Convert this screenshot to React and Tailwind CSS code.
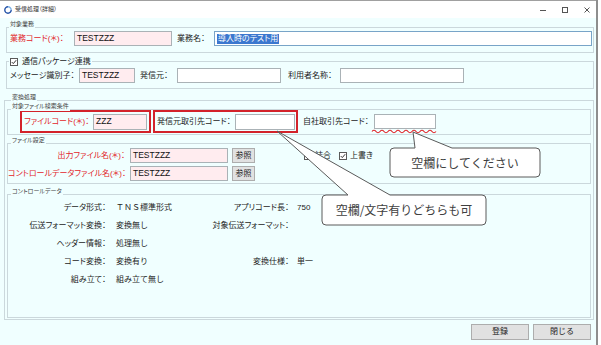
import React from 'react';

const lbl = "whitespace-nowrap text-[8px] leading-[10px] [font-feature-settings:'palt']";
const red = 'text-[#e2262b]';

function GroupLabel({ children, className = '' }) {
  return (
    <div className={`relative z-[1] w-fit whitespace-nowrap bg-[#f0ffff] px-[1px] text-[6px] leading-[9px] text-[#444] [font-feature-settings:'palt'] ${className}`}>
      {children}
    </div>
  );
}

function Field({ tone = 'white', className = '', children }) {
  const tones = {
    pink: 'border-[#aab2b6] bg-[#ffecef]',
    white: 'border-[#aab2b6] bg-white',
    focus: 'border-[#78a4c8] bg-white',
  };
  return (
    <div className={`flex shrink-0 items-center overflow-hidden whitespace-nowrap border px-[2px] text-[8.5px] text-[#111] ${tones[tone]} ${className}`}>
      {children}
    </div>
  );
}

function Btn({ className = '', children }) {
  return (
    <div className={`flex shrink-0 items-center justify-center border border-[#adadad] bg-[#e1e1e1] text-[8px] text-[#222] ${className}`}>
      {children}
    </div>
  );
}

function Check({ className = '' }) {
  return (
    <svg width="8" height="8" viewBox="0 0 8 8" className={`shrink-0 ${className}`}>
      <rect x="0.5" y="0.5" width="7" height="7" fill="white" stroke="#5a5a5a" />
      <path d="M1.8 4.1 L3.3 5.6 L6.2 2.2" fill="none" stroke="#333" strokeWidth="1" />
    </svg>
  );
}

function AppIcon() {
  return (
    <svg width="8" height="8" viewBox="0 0 8 8" className="shrink-0">
      <path d="M4 0.8 A3.2 3.2 0 0 1 7.2 4" fill="none" stroke="#7fb2e5" strokeWidth="1.4" />
      <path d="M7.2 4 A3.2 3.2 0 1 1 4 0.8" fill="none" stroke="#2553a8" strokeWidth="1.4" />
    </svg>
  );
}

const dataRows = [
  ['データ形式：', 'ＴＮＳ標準形式', 'アプリコード長：', '750'],
  ['伝送フォーマット変換：', '変換無し', '対象伝送フォーマット：', ''],
  ['ヘッダー情報：', '処理無し', '', ''],
  ['コード変換：', '変換有り', '変換仕様：', '単一'],
  ['組み立て：', '組み立て無し', '', ''],
];

// red squiggle under the 自社取引先コード field
let wave = 'M372 131.5 Q374 129 376 131.5';
for (let x = 376; x < 436; x += 4) wave += ` T${x + 4} 131.5`;

export default function App() {
  return (
    <div className="relative h-[345px] w-[601px] overflow-hidden bg-white font-['Liberation_Sans','Noto_Sans_CJK_JP',sans-serif] text-[#1c1c1c]">
      <div className="flex h-full w-[598px] flex-col border-r-2 border-[#8e8e8e] bg-[#f0ffff]">
        {/* Title bar */}
        <div className="flex h-[18px] shrink-0 items-center border-t border-[#a0a0a0] bg-white pl-[4px]">
          <AppIcon />
          <span className="ml-[3px] text-[6px] text-[#333] [font-feature-settings:'palt']">受信処理（詳細）</span>
          <div className="ml-auto flex items-center gap-[16px] pr-[6px]">
            <svg width="6" height="6" viewBox="0 0 6 6"><path d="M0 3.5 H6" stroke="#555" /></svg>
            <svg width="6" height="6" viewBox="0 0 6 6"><rect x="0.5" y="0.5" width="5" height="5" fill="none" stroke="#555" /></svg>
            <svg width="6" height="6" viewBox="0 0 6 6"><path d="M0.5 0.5 L5.5 5.5 M5.5 0.5 L0.5 5.5" stroke="#555" /></svg>
          </div>
        </div>

        <div className="flex min-h-0 flex-1 flex-col pl-[4px] pr-[2px]">
          {/* 対象業務 */}
          <div className="ml-[2px] mt-[2px]">
            <GroupLabel className="ml-[3px]">対象業務</GroupLabel>
            <div className="-mt-[2px] border border-[#cbd8dc] pb-[6px] pl-[3px] pr-[1px] pt-[3px]">
              <div className="flex h-[15px] items-center">
                <span className={`${lbl} ${red} w-[64px]`}>業務コード(＊)：</span>
                <Field tone="pink" className="h-[15px] w-[98px]">TESTZZZ</Field>
                <span className={`${lbl} ml-[5px] w-[37px]`}>業務名：</span>
                <Field tone="focus" className="h-[15px] flex-1">
                  <span className="bg-[#3b77cf] px-[1px] text-[8px] leading-[10px] text-white [font-feature-settings:'palt']">導入時のテスト用</span>
                </Field>
              </div>
            </div>
          </div>

          {/* 通信パッケージ連携 */}
          <div className="ml-[2px] mt-[3px]">
            <div className="relative z-[1] ml-[3px] flex h-[11px] w-fit items-center gap-[4px] bg-[#f0ffff] px-[1px]">
              <Check />
              <span className={lbl}>通信パッケージ連携</span>
            </div>
            <div className="-mt-[6px] border border-[#cbd8dc] pb-[5px] pl-[3px] pt-[6px]">
              <div className="flex h-[15px] items-center">
                <span className={`${lbl} w-[69px]`}>メッセージ識別子：</span>
                <Field tone="pink" className="h-[15px] w-[56px]">TESTZZZ</Field>
                <span className={`${lbl} ml-[5px] w-[37px]`}>発信元：</span>
                <Field className="h-[15px] w-[104px]" />
                <span className={`${lbl} ml-[7px] w-[52px]`}>利用者名称：</span>
                <Field className="h-[15px] w-[124px]" />
              </div>
            </div>
          </div>

          {/* 変換処理 */}
          <div className="mt-[4px]">
            <GroupLabel className="ml-[7px]">変換処理</GroupLabel>
            <div className="-mt-[2px] border border-[#cbd8dc] px-[2px] pb-[1px] pt-[1px]">
              {/* 対象ファイル検索条件 */}
              <div>
                <GroupLabel className="ml-[4px]">対象ファイル検索条件</GroupLabel>
                <div className="-mt-[2px] border border-[#cbd8dc] pb-[1px]">
                  <div className="flex h-[23px] items-center">
                    <div className="ml-[12px] flex h-[23px] w-[131px] items-center border-2 border-[#d3222a] pl-[2px]">
                      <span className={`${lbl} ${red} w-[69px]`}>ファイルコード(＊)：</span>
                      <Field tone="pink" className="h-[16px] w-[54px]">ZZZ</Field>
                    </div>
                    <div className="ml-[2px] flex h-[23px] w-[145px] items-center border-2 border-[#d3222a] pl-[2px]">
                      <span className={`${lbl} w-[78px]`}>発信元取引先コード：</span>
                      <Field className="h-[16px] w-[60px]" />
                    </div>
                    <span className={`${lbl} ml-[5px] w-[71px]`}>自社取引先コード：</span>
                    <Field className="h-[15px] w-[62px]" />
                  </div>
                </div>
              </div>

              {/* ファイル設定 */}
              <div className="mt-[1px]">
                <GroupLabel className="ml-[4px]">ファイル設定</GroupLabel>
                <div className="-mt-[2px] flex flex-col gap-[3px] border border-[#cbd8dc] pb-[2px] pt-[4px]">
                  <div className="flex h-[15px] items-center">
                    <span className={`${lbl} ${red} w-[117px] text-right`}>出力ファイル名(＊)：</span>
                    <Field tone="pink" className="ml-[5px] h-[15px] w-[98px]">TESTZZZ</Field>
                    <Btn className="ml-[4px] h-[15px] w-[23px]">参照</Btn>
                    <Check className="ml-[49px]" />
                    <span className={`${lbl} ml-[3px]`}>結合</span>
                    <Check className="ml-[8px]" />
                    <span className={`${lbl} ml-[3px]`}>上書き</span>
                  </div>
                  <div className="flex h-[15px] items-center">
                    <span className={`${lbl} ${red} w-[117px] text-right`}>コントロールデータファイル名(＊)：</span>
                    <Field tone="pink" className="ml-[5px] h-[15px] w-[98px]">TESTZZZ</Field>
                    <Btn className="ml-[4px] h-[15px] w-[23px]">参照</Btn>
                  </div>
                </div>
              </div>

              {/* コントロールデータ */}
              <div className="mt-[3px]">
                <GroupLabel className="ml-[4px]">コントロールデータ</GroupLabel>
                <div className="-mt-[2px] grid grid-cols-[98px_100px_83px_1fr] border border-[#cbd8dc] pb-[28px] pt-[4px]">
                  {dataRows.map((r, i) => (
                    <React.Fragment key={i}>
                      <span className={`${lbl} flex h-[18px] items-center justify-end`}>{r[0]}</span>
                      <span className="flex h-[18px] items-center whitespace-nowrap pl-[10px] text-[8px]">{r[1]}</span>
                      <span className={`${lbl} flex h-[18px] items-center justify-end`}>{r[2]}</span>
                      <span className="flex h-[18px] items-center whitespace-nowrap pl-[8px] text-[8px]">{r[3]}</span>
                    </React.Fragment>
                  ))}
                </div>
              </div>
            </div>
          </div>

          {/* Buttons */}
          <div className="mt-[4px] flex justify-end gap-[4px] pr-[3px]">
            <Btn className="h-[16px] w-[58px]">登録</Btn>
            <Btn className="h-[16px] w-[58px]">閉じる</Btn>
          </div>
        </div>
      </div>

      {/* Annotation callouts */}
      <svg className="pointer-events-none absolute left-0 top-0" width="601" height="345" viewBox="0 0 601 345">
        <path d={wave} fill="none" stroke="#e0262b" strokeWidth="1.2" />
        <path
          d="M394 148 L415 148 L413 132 L452 148 L536 148 Q540 148 540 152 L540 173 Q540 177 536 177 L394 177 Q390 177 390 173 L390 152 Q390 148 394 148 Z"
          fill="white"
          stroke="#5a5a5a"
          strokeWidth="1"
        />
        <path
          d="M326 195 L348 195 L277 131 L390 195 L482 195 Q486 195 486 199 L486 221 Q486 225 482 225 L326 225 Q322 225 322 221 L322 199 Q322 195 326 195 Z"
          fill="white"
          stroke="#5a5a5a"
          strokeWidth="1"
        />
      </svg>
      <div className="absolute left-[390px] top-[148px] flex h-[29px] w-[150px] items-center justify-center font-['Noto_Sans_CJK_JP',sans-serif] text-[12px] text-[#404040]">
        空欄にしてください
      </div>
      <div className="absolute left-[322px] top-[195px] flex h-[30px] w-[164px] items-center justify-center font-['Noto_Sans_CJK_JP',sans-serif] text-[12px] text-[#404040]">
        空欄/文字有りどちらも可
      </div>
    </div>
  );
}
